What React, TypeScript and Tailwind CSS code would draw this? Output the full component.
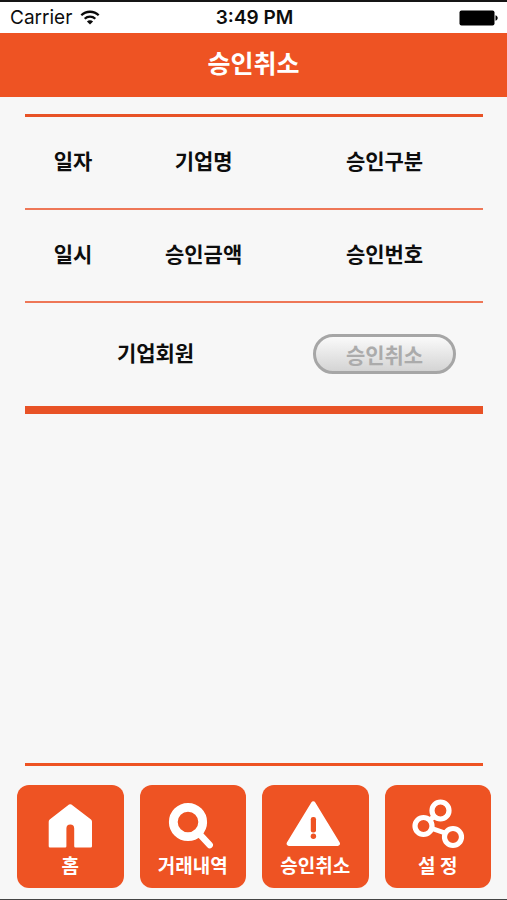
import type { ReactNode } from "react";

function WifiIcon() {
  return (
    <svg viewBox="0 0 20 15" className="h-[15px] w-5" fill="none" stroke="#0a0a0a" aria-hidden="true">
      <path d="M1.3 5.3a12.4 12.4 0 0 1 17.4 0" strokeWidth="2.3" />
      <path d="M4.7 8.7a7.6 7.6 0 0 1 10.6 0" strokeWidth="2.2" />
      <path d="M10 14.6 6.9 11.5a4.4 4.4 0 0 1 6.2 0z" fill="#0a0a0a" stroke="none" />
    </svg>
  );
}

function BatteryIcon() {
  return (
    <svg viewBox="0 0 40 16" className="h-4 w-10" fill="#000" aria-hidden="true">
      <rect x="0.5" y="0.5" width="35" height="15" rx="2" />
      <path d="M36.5 5.2c1.6.6 2.2 1.6 2.2 2.8s-.6 2.2-2.2 2.8z" />
    </svg>
  );
}

function HomeIcon() {
  return (
    <svg viewBox="0 0 108 54" className="h-[54px] w-[108px]" fill="#fff" aria-hidden="true">
      <path d="M53 7.6a2 2 0 0 1 2.4 0L75 22.6a3 3 0 0 1 1 2.2v24.4a1.3 1.3 0 0 1-1.3 1.3H59.4a1.2 1.2 0 0 1-1.2-1.2V31.5a3.9 3.9 0 0 0-7.8 0v17.8a1.2 1.2 0 0 1-1.2 1.2H34a1.3 1.3 0 0 1-1.3-1.3V24.800a3 3 0 0 1 1-2.200z" />
    </svg>
  );
}

function SearchIcon() {
  return (
    <svg viewBox="0 0 108 54" className="h-[54px] w-[108px]" fill="none" stroke="#fff" aria-hidden="true">
      <circle cx="49" cy="25" r="14.7" strokeWidth="8.8" />
      <path d="m60 36.500 10.700 11.500" strokeWidth="6.500" strokeLinecap="round" />
    </svg>
  );
}

function WarningIcon() {
  return (
    <svg viewBox="0 0 108 54" className="h-[54px] w-[108px]" aria-hidden="true">
      <path d="M50.300 5.400a2.400 2.400 0 0 1 4 0L78.700 45.500a2.300 2.300 0 0 1-2 3.500H27.900a2.300 2.300 0 0 1-2-3.500z" fill="#fff" />
      <rect x="49.800" y="20" width="5.200" height="15.500" rx="2.200" fill="#ee5323" />
      <circle cx="52.400" cy="39.300" r="2.700" fill="#ee5323" />
    </svg>
  );
}

function SettingsIcon() {
  return (
    <svg viewBox="0 0 108 54" className="h-[54px] w-[108px]" fill="none" stroke="#fff" aria-hidden="true">
      <circle cx="56.500" cy="13.500" r="8.500" strokeWidth="5.200" />
      <circle cx="39.500" cy="29" r="8.500" strokeWidth="5.200" />
      <circle cx="69" cy="40" r="8.500" strokeWidth="5.200" />
      <path d="m46 23 4-3.500M48 31.500l13 4.500" strokeWidth="5" />
    </svg>
  );
}

function Tile({ label, children }: { label: string; children: ReactNode }) {
  return (
    <button
      type="button"
      className="flex h-[103px] flex-1 flex-col items-center overflow-hidden rounded-xl bg-[#ee5323] pt-3 text-[19px] leading-7 font-bold text-white"
    >
      {children}
      <span>{label}</span>
    </button>
  );
}

export default function App() {
  return (
    <div className="flex min-h-screen flex-col border-t-2 border-b border-t-[#151515] border-b-[#444] bg-[#f7f7f7] font-['Noto_Sans_CJK_KR',sans-serif] text-[#0d0d0d]">
      <div className="grid h-[31px] grid-cols-[1fr_auto_1fr] items-center bg-white pr-2 pl-2.5 font-['Inter',sans-serif] text-[19px] leading-6">
        <div className="flex items-center gap-2">
          <span>Carrier</span>
          <WifiIcon />
        </div>
        <span className="text-center font-semibold">3:49 PM</span>
        <div className="flex justify-end">
          <BatteryIcon />
        </div>
      </div>

      <header className="flex h-16 items-center justify-center bg-[#ee5323] pb-1.5">
        <h1 className="text-[25px] leading-8 font-bold text-white">승인취소</h1>
      </header>

      <main className="flex grow flex-col pt-[17px] pr-6 pl-[25px]">
        <table className="w-full table-fixed border-collapse border-t-3 border-b-8 border-[#e85226] text-center text-[21px] leading-8">
          <colgroup>
            <col className="w-[21%]" />
            <col className="w-[36%]" />
            <col className="w-[43%]" />
          </colgroup>
          <thead>
            <tr className="h-[93px] border-b-2 border-[#ee7757]">
              <th className="pb-1">일자</th>
              <th className="pb-1">기업명</th>
              <th className="pb-1">승인구분</th>
            </tr>
            <tr className="h-[93px] border-b-2 border-[#ee7757]">
              <th className="pb-1">일시</th>
              <th className="pb-1">승인금액</th>
              <th className="pb-1">승인번호</th>
            </tr>
            <tr className="h-[108px]">
              <th colSpan={2} className="pb-1">기업회원</th>
              <th>
                <button
                  type="button"
                  disabled
                  className="mx-auto flex h-10 w-[143px] items-center justify-center rounded-full border-3 border-[#a6a6a6] bg-linear-to-b from-[#fafafa] to-[#d4d4d4] font-bold text-[#ababab]"
                >
                  승인취소
                </button>
              </th>
            </tr>
          </thead>
        </table>
      </main>

      <footer className="pb-[11px]">
        <hr className="mr-6 ml-[25px] border-t-3 border-[#ee5323]" />
        <nav className="flex gap-4 pt-[19px] pr-4 pl-[17px]">
          <Tile label="홈"><HomeIcon /></Tile>
          <Tile label="거래내역"><SearchIcon /></Tile>
          <Tile label="승인취소"><WarningIcon /></Tile>
          <Tile label="설 정"><SettingsIcon /></Tile>
        </nav>
      </footer>
    </div>
  );
}
